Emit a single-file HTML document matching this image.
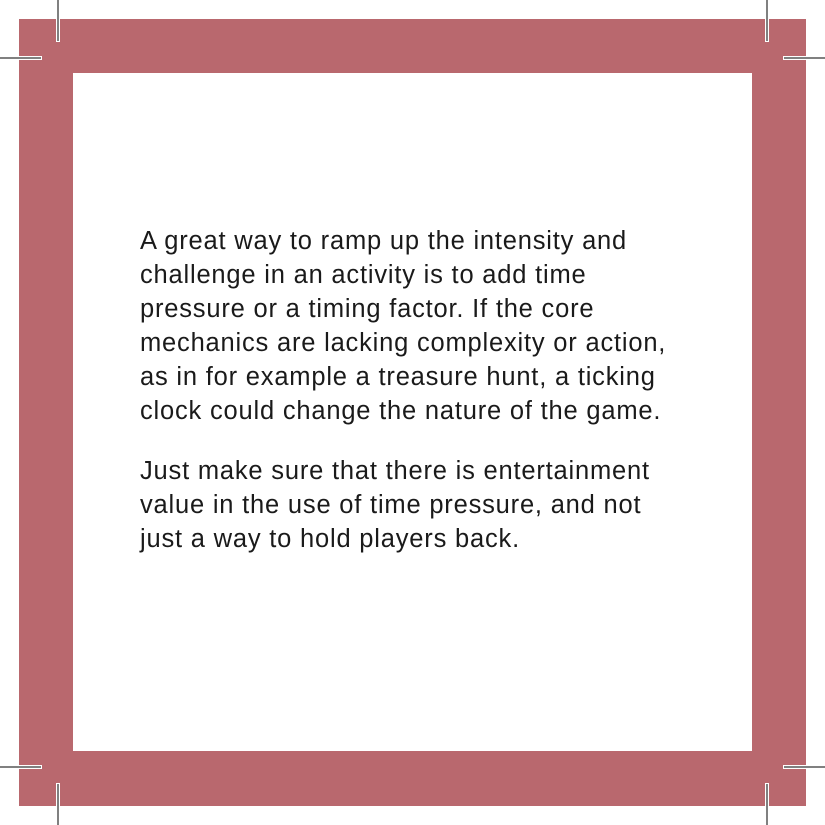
<!DOCTYPE html>
<html><head><style>
body{margin:0;width:825px;height:825px;background:#fff;position:relative;overflow:hidden}
.red{position:absolute;left:19px;top:19px;width:787px;height:787px;background:#b9686e}
.in{position:absolute;left:73px;top:73px;width:679px;height:678px;background:#fff}
.v,.h{position:absolute;background:#808080}
.v{width:2px;box-shadow:0 0 0 1px #fff}
.h{height:2px;box-shadow:0 0 0 1px #fff}
.t{position:absolute;left:140px;top:224px;font-family:"Liberation Sans",sans-serif;font-size:25.5px;line-height:34px;color:#1a1a1a;white-space:nowrap;letter-spacing:0.8px}
</style></head><body>
<div class="red"></div><div class="in"></div>
<div class="v" style="left:57px;top:0;height:41px"></div>
<div class="h" style="left:0;top:57px;width:41px"></div>
<div class="v" style="left:766px;top:0;height:41px"></div>
<div class="h" style="left:784px;top:57px;width:41px"></div>
<div class="v" style="left:57px;top:784px;height:41px"></div>
<div class="h" style="left:0;top:766px;width:41px"></div>
<div class="v" style="left:766px;top:784px;height:41px"></div>
<div class="h" style="left:784px;top:766px;width:41px"></div>
<div class="t">A great way to ramp up the intensity and<br>challenge in an activity is to add time<br>pressure or a timing factor. If the core<br>mechanics are lacking complexity or action,<br>as in for example a treasure hunt, a ticking<br>clock could change the nature of the game.<br><div style="height:26px"></div>Just make sure that there is entertainment<br>value in the use of time pressure, and not<br>just a way to hold players back.</div>
</body></html>
